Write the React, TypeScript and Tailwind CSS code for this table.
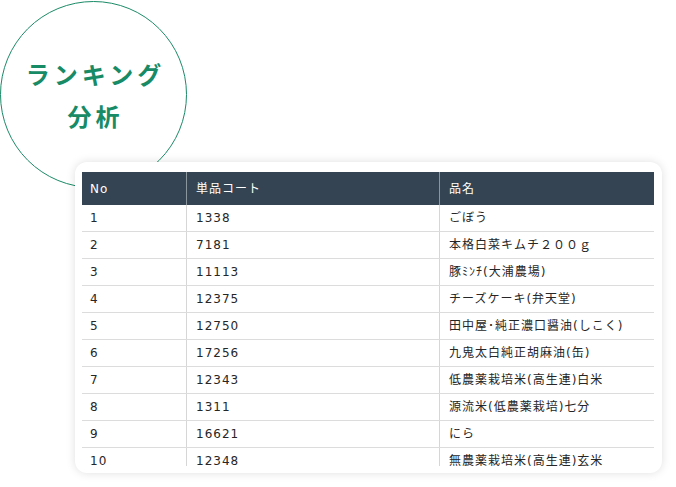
import React from "react";

const rows: [string, string, string][] = [
  ["1", "1338", "ごぼう"],
  ["2", "7181", "本格白菜キムチ２００ｇ"],
  ["3", "11113", "豚ﾐﾝﾁ(大浦農場)"],
  ["4", "12375", "チーズケーキ(弁天堂)"],
  ["5", "12750", "田中屋･純正濃口醤油(しこく)"],
  ["6", "17256", "九鬼太白純正胡麻油(缶)"],
  ["7", "12343", "低農薬栽培米(高生連)白米"],
  ["8", "1311", "源流米(低農薬栽培)七分"],
  ["9", "16621", "にら"],
  ["10", "12348", "無農薬栽培米(高生連)玄米"],
];

const font = { fontFamily: '"Noto Sans CJK JP", "Noto Sans", sans-serif' };
const tableFont = { fontFamily: '"DejaVu Sans", "Noto Sans CJK JP", sans-serif' };

export default function App() {
  return (
    <div className="w-[676px] h-[487px] bg-white overflow-hidden" style={font}>
      <div className="pt-[1px]">
        <div className="w-[187px] h-[187px] rounded-full border-[1.5px] border-[#1b8a67] flex flex-col items-center justify-center text-[#178a66] font-bold text-[24px] leading-[42px] tracking-[4px]">
          <div className="pl-[4px]">ランキング</div>
          <div className="pl-[4px]">分析</div>
        </div>
      </div>
      <div className="relative z-10 -mt-[26px] ml-[75px] w-[587px] h-[311px] bg-white rounded-[12px] shadow-[0_0_10px_rgba(0,0,0,0.13)] pt-[10px] pl-[7px] pr-[8px] pb-[7px]">
        <div className="w-[572px] h-[294px] overflow-hidden text-[12px] tracking-[1px]" style={tableFont}>
          <div className="grid grid-cols-[105px_253px_214px] h-[33px] bg-[#344452] text-white">
            <div className="flex items-center pl-[8px] border-r border-[#8a959e]">No</div>
            <div className="flex items-center pl-[9px] border-r border-[#8a959e]">単品コート</div>
            <div className="flex items-center pl-[9px]">品名</div>
          </div>
          {rows.map((r) => (
            <div
              key={r[0]}
              className="grid grid-cols-[105px_253px_214px] h-[27px] border-b-[1.5px] border-[#dcdcdc] text-[#262626]"
            >
              <div className="flex items-center pl-[8px] border-r-[1.5px] border-[#d6d6d6]">{r[0]}</div>
              <div className="flex items-center pl-[9px] border-r-[1.5px] border-[#d6d6d6]">{r[1]}</div>
              <div className="flex items-center pl-[9px] whitespace-nowrap">{r[2]}</div>
            </div>
          ))}
        </div>
      </div>
    </div>
  );
}
